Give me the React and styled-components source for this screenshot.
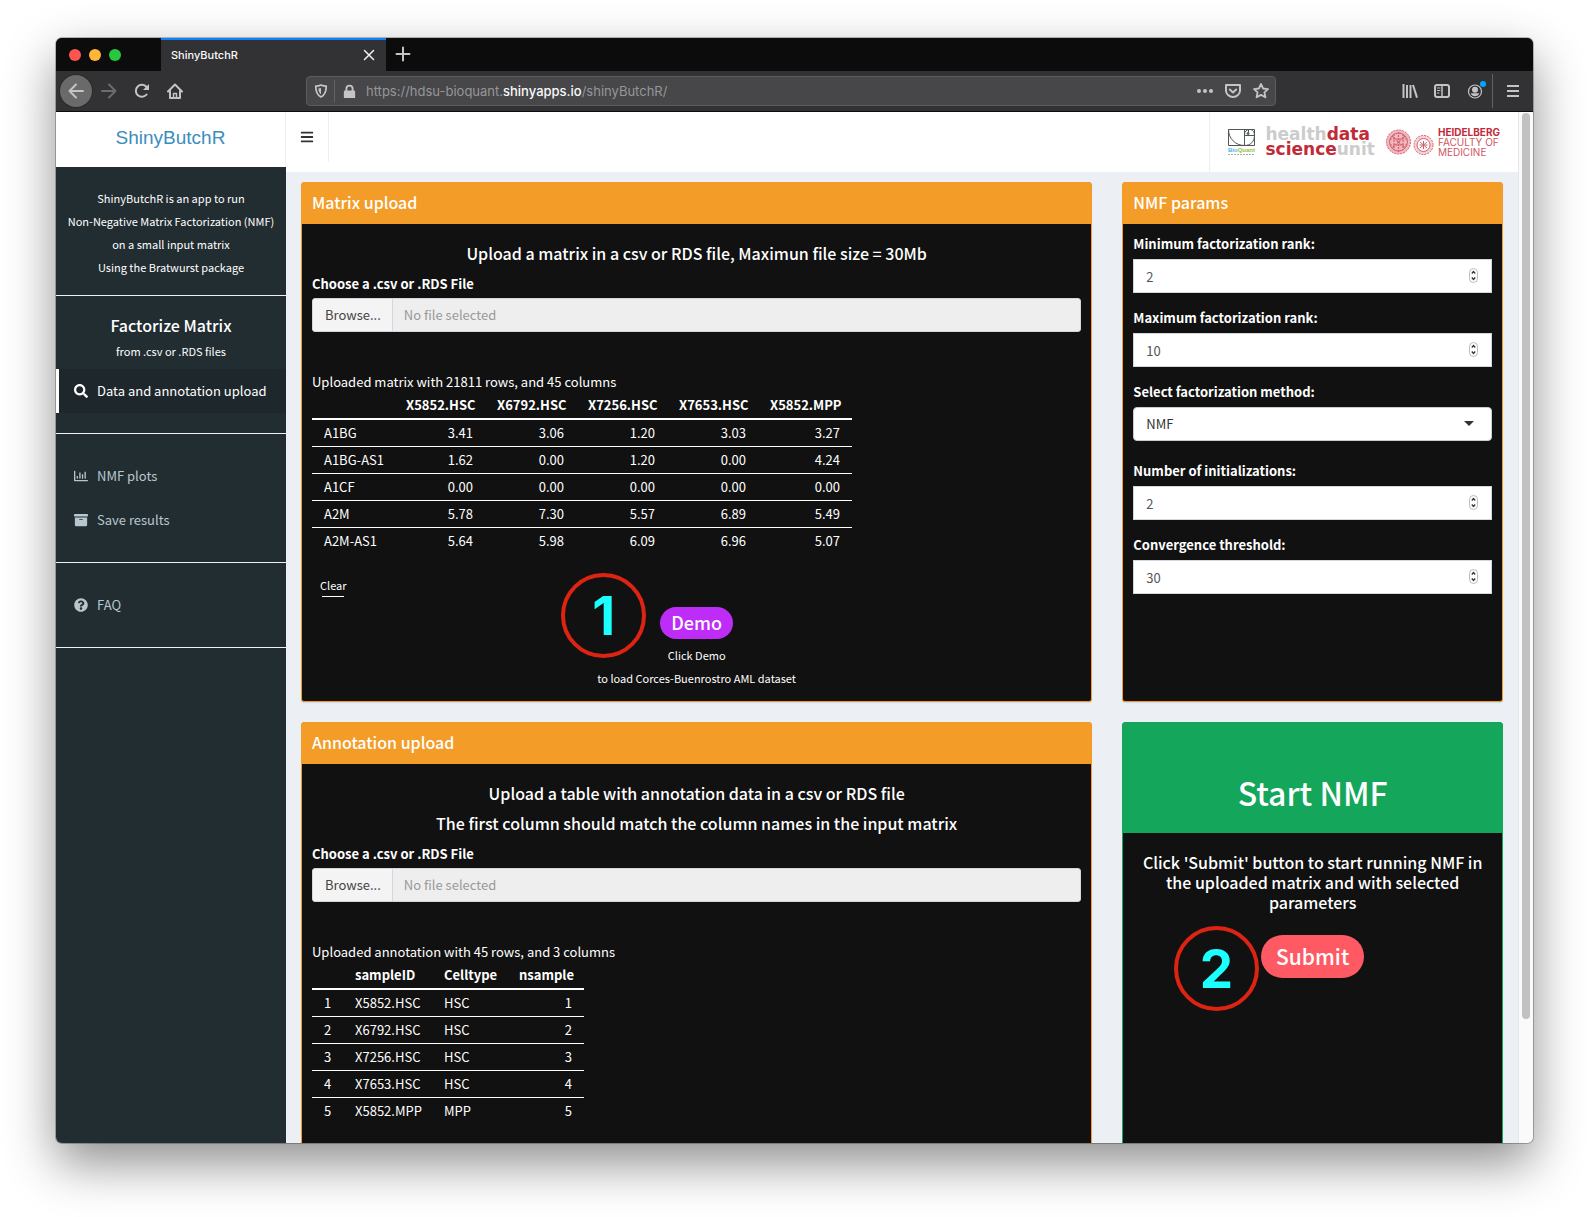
import React from "react";
import styled, { createGlobalStyle, css } from "styled-components";
import {
  FaSearch,
  FaRegChartBar,
  FaArchive,
  FaQuestionCircle,
  FaBars,
} from "react-icons/fa";

const sans = `"Noto Sans CJK SC", "Noto Sans", sans-serif`;
const chromeSans = `Inter, "Liberation Sans", sans-serif`;

const tones = { warning: "#f39c28", success: "#14a65b" };

const GlobalStyle = createGlobalStyle`
  *, *::before, *::after { box-sizing: border-box; }
  body {
    margin: 0;
    background: #fff;
    color: #fff;
    font: 400 13px/20px ${sans};
  }
  button, input, select { font: inherit; color: inherit; margin: 0; }
  button { border: 0; padding: 0; background: none; cursor: pointer; }
  h1, h2, h3, h4, p, ul { margin: 0; padding: 0; font-weight: 500; }
  p { font-weight: 400; }
  ul { list-style: none; }
  a { color: inherit; text-decoration: none; }
`;

const Stage = styled.div`
  display: flex;
  height: 100vh;
  padding: 38px 56px 74px;
`;

const Window = styled.div`
  flex: 1;
  min-width: 0;
  display: flex;
  flex-direction: column;
  overflow: hidden;
  border-radius: 6px;
  background: #323234;
  box-shadow: 0 0 0 1px rgba(0, 0, 0, 0.25), 0 20px 50px rgba(0, 0, 0, 0.45);
`;

/* Browser chrome */

const TabBar = styled.div`
  display: flex;
  flex: none;
  height: 33px;
  background: #0c0c0d;
  font-family: ${chromeSans};
`;

const TrafficLights = styled.div`
  display: flex;
  align-items: center;
  gap: 8px;
  width: 105px;
  padding-left: 13px;
`;

const Light = styled.span`
  width: 12px;
  height: 12px;
  border-radius: 50%;
  background: ${(p) => p.$color};
`;

const Tab = styled.div`
  display: flex;
  align-items: center;
  justify-content: space-between;
  width: 225px;
  padding: 0 11px 1px 10px;
  border-top: 2px solid #0a84ff;
  background: #323234;
  color: #f9f9fa;
  font-size: 11px;
  font-weight: 500;
`;

const IconButton = styled.button`
  display: flex;
  align-items: center;
  justify-content: center;
  flex: none;
  width: ${(p) => p.$width || 32}px;
  height: 32px;
  border-radius: 50%;
  color: ${(p) => (p.$dim ? "#6c6c6e" : "#c4c4c6")};
  ${(p) =>
    p.$filled &&
    css`
      background: #6a6a6b;
      box-shadow: 0 0 0 1px #2a2a2b;
    `}
`;

const TabClose = styled.button`
  display: flex;
  color: #f0f0f1;
`;

const Toolbar = styled.div`
  display: flex;
  align-items: center;
  flex: none;
  height: 41px;
  padding-left: 4px;
  border-bottom: 1px solid #0c0c0d;
  background: #323234;
`;

const NavButtons = styled.div`
  display: flex;
  gap: 1px;
`;

const UrlBar = styled.div`
  display: flex;
  align-items: center;
  flex: 1;
  height: 30px;
  margin: 0 118px 0 115px;
  padding: 0 0 0 1px;
  border: 1px solid #5c5c5e;
  border-radius: 4px;
  background: #474749;
  color: #b1b1b3;
`;

const Divider = styled.span`
  width: 1px;
  height: ${(p) => p.$height}px;
  background: #626264;
`;

const Url = styled.div`
  flex: 1;
  padding-left: 3px;
  color: #96969a;
  font: 400 13px/20px ${chromeSans};
  b {
    font-weight: 500;
    color: #f9f9fa;
  }
`;

/* Page */

const Page = styled.div`
  display: flex;
  flex: 1;
  min-height: 0;
  background: #ecf0f5;
`;

const Sidebar = styled.aside`
  flex: none;
  width: 230px;
  background: #222d32;
`;

const Brand = styled.a`
  display: block;
  height: 55px;
  border-right: 1px solid #eee;
  background: #fff;
  color: #3c8dbc;
  text-align: center;
  font: 400 19px/52px "Liberation Sans", Arial, sans-serif;
`;

const Small = styled.p`
  font-size: 11px;
  line-height: 23px;
  text-align: center;
`;

const Intro = styled.div`
  padding: 20px 0 16px;
`;

const SideSection = styled.div`
  padding: 20px 0;
  border-top: 1px solid #f0f0f0;
  &:last-child {
    border-bottom: 1px solid #f0f0f0;
  }
`;

const Heading = styled.h4`
  font-size: 16px;
  line-height: 20px;
  text-align: center;
`;

const SideTitle = styled(Heading)`
  line-height: 18px;
`;

const SideCaption = styled(Small)`
  padding: 6px 0;
`;

const SideLink = styled.a`
  display: flex;
  align-items: center;
  gap: 9px;
  height: 44px;
  padding-left: 15px;
  border-left: 3px solid ${(p) => (p.$active ? "#fff" : "transparent")};
  background: ${(p) => (p.$active ? "#1e282c" : "transparent")};
  color: ${(p) => (p.$active ? "#fff" : "#b8c7ce")};
`;

const Main = styled.div`
  flex: 1;
  min-width: 0;
  overflow: hidden;
`;

const Header = styled.header`
  display: flex;
  align-items: flex-start;
  justify-content: space-between;
  height: 60px;
  background: #fff;
`;

const Toggle = styled.button`
  display: flex;
  align-items: center;
  justify-content: center;
  width: 43px;
  height: 50px;
  border-right: 1px solid #eee;
  color: #333;
`;

const Logos = styled.div`
  display: flex;
  align-items: center;
  height: 60px;
  padding: 0 18px;
  border-left: 1px solid #eee;
`;

const UnitLogo = styled.div`
  margin: 0 11px 0 10px;
  color: #ccc;
  font: 700 17px/15px "DejaVu Sans", sans-serif;
  b {
    color: #c22a38;
  }
`;

const FacultyLogo = styled.div`
  margin-left: 4px;
  color: #cf5663;
  font: 400 10px/10px ${chromeSans};
  b {
    color: #c22a38;
  }
`;

const Content = styled.main`
  display: flex;
  padding-top: 10px;
`;

const Column = styled.div`
  width: calc(100% * ${(p) => p.$span} / 12);
  padding: 0 15px;
`;

const Box = styled.section`
  display: flex;
  flex-direction: column;
  min-height: 520px;
  margin-bottom: 20px;
  border: 1px solid ${(p) => tones[p.$tone]};
  border-radius: 3px;
  background: #111;
  box-shadow: 0 1px 1px rgba(0, 0, 0, 0.1);
`;

const BoxHeader = styled.header`
  padding: ${(p) => (p.$large ? "49px 10px 21px" : "9px 10px 12px")};
  background: ${(p) => tones[p.$tone]};
  text-align: ${(p) => (p.$large ? "center" : "left")};
`;

const BoxTitle = styled.h3`
  font-size: 16px;
  line-height: 20px;
`;

const BigTitle = styled.h1`
  font-size: 32px;
  line-height: 40px;
`;

const BoxBody = styled.div`
  padding: 10px;
`;

const Lead = styled(Heading)`
  margin: 9px 0 10px;
`;

const Label = styled.label`
  display: block;
  margin-bottom: 5px;
  font-weight: 700;
`;

const FileLabel = styled(Label)`
  margin: 11px 0 4px;
`;

const FilePicker = styled.div`
  display: flex;
  height: 34px;
  margin-bottom: 40px;
  border: 1px solid #d2d6de;
  border-radius: 3px;
  background: #eee;
  overflow: hidden;
`;

const Browse = styled.label`
  padding: 6px 11px 6px 12px;
  border-right: 1px solid #d2d6de;
  background: #f4f4f4;
  color: #444;
  cursor: pointer;
`;

const FileName = styled.input`
  flex: 1;
  min-width: 0;
  padding: 0 11px;
  border: 0;
  background: transparent;
  color: #555;
  &::placeholder {
    color: #999;
    opacity: 1;
  }
`;

const Table = styled.table`
  width: ${(p) => p.$width}px;
  table-layout: fixed;
  border-collapse: separate;
  border-spacing: 0;
  thead th {
    border-bottom: 2px solid #fff;
  }
  tbody tr:first-child td {
    border-top: 0;
  }
`;

const align = css`
  padding: 3px 12px;
  text-align: ${(p) => (p.$right ? "right" : "left")};
  white-space: nowrap;
`;

const Th = styled.th`
  ${align}
  font-weight: 700;
`;

const Td = styled.td`
  ${align}
  border-top: 1px solid #fff;
`;

const ClearButton = styled.button`
  display: flex;
  flex-direction: column;
  align-items: center;
  margin: 21px 0 10px;
  padding: 0 8px;
  font-size: 11px;
  line-height: 21px;
  &::after {
    content: "";
    width: 22px;
    height: 1px;
    background: #fff;
  }
`;

const Action = styled.div`
  display: flex;
  justify-content: center;
  margin: ${(p) => p.$margin};
`;

const ActionAnchor = styled.div`
  position: relative;
`;

const Pill = styled.button`
  display: block;
  height: ${(p) => p.$height}px;
  padding: 0 ${(p) => p.$pad}px 2px;
  border-radius: 22px;
  background: ${(p) => p.$color};
  font-size: ${(p) => p.$size}px;
  font-weight: 500;
`;

const Step = styled.span`
  position: absolute;
  top: ${(p) => p.$top}px;
  right: calc(100% + ${(p) => p.$gap}px);
  width: 85px;
  height: 85px;
  border: 4px solid #dd2413;
  border-radius: 50%;
  color: #1cffff;
  text-align: center;
  font: 700 53px/78px ${chromeSans};
`;

const Field = styled.div`
  margin-bottom: ${(p) => p.$gap || 15}px;
`;

const Control = styled.div`
  position: relative;
  svg {
    position: absolute;
    right: ${(p) => p.$inset}px;
    top: 9px;
    pointer-events: none;
  }
`;

const controlStyle = css`
  display: block;
  width: 100%;
  height: 34px;
  padding: 0 12px;
  border: 1px solid #d2d6de;
  background: #fff;
  appearance: none;
`;

const NumberInput = styled.input`
  ${controlStyle}
  color: #555;
  appearance: textfield;
  &::-webkit-inner-spin-button,
  &::-webkit-outer-spin-button {
    appearance: none;
    margin: 0;
  }
`;

const Select = styled.select`
  ${controlStyle}
  border-color: #ccc;
  border-radius: 4px;
  color: #333;
`;

const ScrollTrack = styled.div`
  flex: none;
  width: 15px;
  padding: 1px 3px;
  border-left: 1px solid #e6e6e6;
  background: #fafafa;
`;

const ScrollThumb = styled.div`
  width: 8px;
  height: 88%;
  border-radius: 4px;
  background: #c1c1c1;
`;

/* Drawings */

const Icon = ({ size = 16, children, ...rest }) => (
  <svg
    width={size}
    height={size}
    viewBox="0 0 16 16"
    fill="none"
    stroke="currentColor"
    strokeWidth="2"
    strokeLinecap="round"
    strokeLinejoin="round"
    aria-hidden="true"
    {...rest}
  >
    {children}
  </svg>
);

const BackIcon = () => (
  <Icon><path d="M15 8H1.5M8 1.5 1.5 8 8 14.5" /></Icon>
);
const ForwardIcon = () => (
  <Icon><path d="M1 8h13.5M8 1.5 14.5 8 8 14.5" /></Icon>
);
const ReloadIcon = () => (
  <Icon>
    <path d="M12.6 11.5A6 6 0 1 1 12.5 4" />
    <path d="M15 1v6H9z" fill="currentColor" stroke="none" />
  </Icon>
);
const HomeIcon = () => (
  <Icon>
    <path d="M1 8.5 8 1.5l7 7M3 7.5V15h10V7.5" />
    <path d="M6.5 15v-4.5h3V15" strokeWidth="1.5" />
  </Icon>
);
const ShieldIcon = () => (
  <Icon size={14}>
    <path d="M8 1.2c2 1 4 1.3 6 1.3 0 6-1.5 10-6 12.3C3.500 12.5 2 8.5 2 2.5c2 0 4-.3 6-1.300z" />
    <path d="M8 4.5v7.3C6 10.300 5 8 5 5.2z" fill="currentColor" stroke="none" />
  </Icon>
);
const LockIcon = () => (
  <Icon size={15}>
    <rect x="2" y="7" width="12" height="8" rx="1" fill="currentColor" stroke="none" />
    <path d="M4.7 8V5a3.3 3.3 0 0 1 6.6 0v3" />
  </Icon>
);
const DotsIcon = () => (
  <Icon fill="currentColor" stroke="none">
    <circle cx="2" cy="8" r="2" />
    <circle cx="8" cy="8" r="2" />
    <circle cx="14" cy="8" r="2" />
  </Icon>
);
const PocketIcon = () => (
  <Icon>
    <path d="M1 2h14v5.5a7 6.5 0 0 1-14 0z" />
    <path d="m4.8 6.5 3.2 3 3.2-3" />
  </Icon>
);
const StarIcon = () => (
  <Icon strokeWidth="1.8">
    <path d="m8 1 2.1 4.500 4.900.6-3.600 3.300 1 4.900L8 11.900l-4.400 2.400 1-4.900L1 6.100l4.900-.6z" />
  </Icon>
);
const LibraryIcon = () => (
  <Icon strokeLinecap="butt">
    <path d="M1.500 1v14M5 2v13M8.500 2v13M11 2l4 12.600" />
  </Icon>
);
const SidebarIcon = () => (
  <Icon>
    <rect x="1" y="2" width="14" height="12" rx="2" />
    <path d="M8 2v12" strokeWidth="1.5" />
    <path d="M3.3 5H6M3.3 7.5H6M3.3 10H5" strokeWidth="1" />
  </Icon>
);
const AccountIcon = () => (
  <svg width="22" height="22" viewBox="0 0 22 22" aria-hidden="true">
    <circle cx="11" cy="11.500" r="6.500" fill="none" stroke="currentColor" strokeWidth="1.200" />
    <circle cx="11" cy="9.800" r="3" fill="currentColor" />
    <path d="M6.800 13.300h8.400c-.6 2.200-2.200 3-4.200 3s-3.600-.8-4.200-3z" fill="currentColor" />
    <circle cx="19" cy="4" r="3" fill="#00a8ff" />
  </svg>
);
const MenuIcon = () => (
  <Icon strokeLinecap="butt"><path d="M2 3h12M2 8h12M2 13h12" /></Icon>
);
const CloseIcon = () => (
  <Icon size={12}><path d="m2 2 12 12M14 2 2 14" /></Icon>
);
const PlusIcon = () => (
  <Icon><path d="M8 1.5v13M1.5 8h13" /></Icon>
);

const BioQuantLogo = () => (
  <svg width="27" height="27" viewBox="0 0 27 27" role="img" aria-label="BioQuant">
    <g fill="none" stroke="#555" strokeWidth="1">
      <path d="M.5.5h26v16H.5zM16.5.5v16M16.5 6.5h10M20.5.5v6" />
      <path d="M.5.500c0 9 7 16 16 16 6 0 10-4 10-10 0-4-2-6-5-6s-5 2-5 5" />
    </g>
    <circle cx="20" cy="4.500" r="1.500" fill="#3a7f9a" />
    <text x="0" y="23" fontFamily="Liberation Sans, sans-serif" fontSize="6" fontWeight="700" fill="#3fb5e8">
      Bio<tspan fill="#8cc63f">Quant</tspan>
    </text>
    <path d="M0 25.500h27" stroke="#aaa" strokeWidth="1" strokeDasharray="2 1" />
  </svg>
);

const SealsLogo = () => (
  <svg width="48" height="27" viewBox="0 0 48 27" aria-hidden="true">
    <g fill="none" stroke="#d4606c">
      <circle cx="12.500" cy="13" r="12" fill="#efb9bf" strokeWidth="1" strokeDasharray="2 1" />
      <circle cx="12.500" cy="13" r="9" strokeWidth="1" />
      <path d="M12.500 3v20M8 5v16M17 5v16M4 10h17M4 16h17M6 7l13 12M19 7 6 19" strokeWidth="1.200" strokeDasharray="2 1" />
      <circle cx="37.500" cy="16" r="9.500" fill="#f6d3d7" strokeWidth="1" strokeDasharray="2 1" />
      <circle cx="37.500" cy="16" r="6.500" fill="#fff" strokeWidth="1" />
      <path d="M34 13l7 6M41 13l-7 6M33.500 16h8M37.500 12v8" strokeWidth="1" />
    </g>
  </svg>
);

const SpinnerIcon = () => (
  <svg width="9" height="15" viewBox="0 0 9 15" aria-hidden="true">
    <rect x=".5" y=".5" width="8" height="14" rx="4" fill="#fff" stroke="#bbb" />
    <path d="m2.800 5.500 1.700-2 1.700 2M2.800 9.500l1.700 2 1.700-2" fill="none" stroke="#333" strokeWidth="1.300" />
  </svg>
);

const CaretIcon = () => (
  <svg width="10" height="15" viewBox="0 0 10 15" aria-hidden="true">
    <path d="M0 5h10L5 10z" fill="#333" />
  </svg>
);

/* Data */

const matrix = {
  width: 540,
  columns: [
    { name: "", width: 82 },
    { name: "X5852.HSC", width: 91, right: true },
    { name: "X6792.HSC", width: 91, right: true },
    { name: "X7256.HSC", width: 91, right: true },
    { name: "X7653.HSC", width: 91, right: true },
    { name: "X5852.MPP", width: 94, right: true },
  ],
  rows: [
    ["A1BG", "3.41", "3.06", "1.20", "3.03", "3.27"],
    ["A1BG-AS1", "1.62", "0.00", "1.20", "0.00", "4.24"],
    ["A1CF", "0.00", "0.00", "0.00", "0.00", "0.00"],
    ["A2M", "5.78", "7.30", "5.57", "6.89", "5.49"],
    ["A2M-AS1", "5.64", "5.98", "6.09", "6.96", "5.07"],
  ],
};

const annotation = {
  width: 272,
  columns: [
    { name: "", width: 31 },
    { name: "sampleID", width: 89 },
    { name: "Celltype", width: 75 },
    { name: "nsample", width: 77, right: true },
  ],
  rows: [
    ["1", "X5852.HSC", "HSC", "1"],
    ["2", "X6792.HSC", "HSC", "2"],
    ["3", "X7256.HSC", "HSC", "3"],
    ["4", "X7653.HSC", "HSC", "4"],
    ["5", "X5852.MPP", "MPP", "5"],
  ],
};

const DataTable = ({ data }) => (
  <Table $width={data.width}>
    <colgroup>
      {data.columns.map((c, i) => (
        <col key={i} width={c.width} />
      ))}
    </colgroup>
    <thead>
      <tr>
        {data.columns.map((c, i) => (
          <Th key={i} $right={c.right} scope="col">{c.name || "\u00a0"}</Th>
        ))}
      </tr>
    </thead>
    <tbody>
      {data.rows.map((row) => (
        <tr key={row[0]}>
          {row.map((cell, i) => (
            <Td key={i} $right={data.columns[i].right}>{cell}</Td>
          ))}
        </tr>
      ))}
    </tbody>
  </Table>
);

const FileField = ({ id }) => (
  <>
    <FileLabel htmlFor={id}>Choose a .csv or .RDS File</FileLabel>
    <FilePicker>
      <Browse>
        Browse...
        <input id={id} type="file" hidden />
      </Browse>
      <FileName placeholder="No file selected" aria-label="Selected file" readOnly />
    </FilePicker>
  </>
);

const NumberField = ({ id, label, value }) => (
  <Field>
    <Label htmlFor={id}>{label}</Label>
    <Control $inset={14}>
      <NumberInput id={id} type="number" defaultValue={value} />
      <SpinnerIcon />
    </Control>
  </Field>
);

export default function App() {
  return (
    <>
      <GlobalStyle />
      <Stage>
        <Window>
          <TabBar>
            <TrafficLights>
              <Light $color="#ff5550" />
              <Light $color="#ffb537" />
              <Light $color="#27c840" />
            </TrafficLights>
            <Tab>
              ShinyButchR
              <TabClose aria-label="Close tab"><CloseIcon /></TabClose>
            </Tab>
            <IconButton $width={34} aria-label="New tab"><PlusIcon /></IconButton>
          </TabBar>
          <Toolbar>
            <NavButtons>
              <IconButton $filled aria-label="Back"><BackIcon /></IconButton>
              <IconButton $dim aria-label="Forward"><ForwardIcon /></IconButton>
              <IconButton aria-label="Reload"><ReloadIcon /></IconButton>
              <IconButton aria-label="Home"><HomeIcon /></IconButton>
            </NavButtons>
            <UrlBar>
              <IconButton $width={26} aria-label="Tracking protection"><ShieldIcon /></IconButton>
              <Divider $height={22} />
              <IconButton $width={28} aria-label="Site security"><LockIcon /></IconButton>
              <Url>
                https://hdsu-bioquant.<b>shinyapps.io</b>/shinyButchR/
              </Url>
              <IconButton $width={28} aria-label="Page actions"><DotsIcon /></IconButton>
              <IconButton $width={28} aria-label="Save to Pocket"><PocketIcon /></IconButton>
              <IconButton $width={28} aria-label="Bookmark"><StarIcon /></IconButton>
            </UrlBar>
            <IconButton aria-label="Library"><LibraryIcon /></IconButton>
            <IconButton aria-label="Sidebars"><SidebarIcon /></IconButton>
            <IconButton $width={34} aria-label="Account"><AccountIcon /></IconButton>
            <Divider $height={34} />
            <IconButton $width={40} aria-label="Menu"><MenuIcon /></IconButton>
          </Toolbar>

          <Page>
            <Sidebar>
              <Brand href="#">ShinyButchR</Brand>
              <Intro>
                <Small>ShinyButchR is an app to run</Small>
                <Small>Non-Negative Matrix Factorization (NMF)</Small>
                <Small>on a small input matrix</Small>
                <Small>Using the Bratwurst package</Small>
              </Intro>
              <SideSection>
                <SideTitle>Factorize Matrix</SideTitle>
                <SideCaption>from .csv or .RDS files</SideCaption>
                <SideLink href="#upload" $active>
                  <FaSearch size={14} />
                  Data and annotation upload
                </SideLink>
              </SideSection>
              <SideSection>
                <SideLink href="#plots">
                  <FaRegChartBar size={14} />
                  NMF plots
                </SideLink>
                <SideLink href="#save">
                  <FaArchive size={14} />
                  Save results
                </SideLink>
              </SideSection>
              <SideSection>
                <SideLink href="#faq">
                  <FaQuestionCircle size={14} />
                  FAQ
                </SideLink>
              </SideSection>
            </Sidebar>

            <Main>
              <Header>
                <Toggle aria-label="Toggle navigation"><FaBars size={14} /></Toggle>
                <Logos>
                  <BioQuantLogo />
                  <UnitLogo>
                    <div>health<b>data</b></div>
                    <div><b>science</b>unit</div>
                  </UnitLogo>
                  <SealsLogo />
                  <FacultyLogo>
                    <b>HEIDELBERG</b>
                    <br />
                    FACULTY OF
                    <br />
                    MEDICINE
                  </FacultyLogo>
                </Logos>
              </Header>

              <Content>
                <Column $span={8}>
                  <Box $tone="warning">
                    <BoxHeader $tone="warning"><BoxTitle>Matrix upload</BoxTitle></BoxHeader>
                    <BoxBody>
                      <Lead>Upload a matrix in a csv or RDS file, Maximun file size = 30Mb</Lead>
                      <FileField id="matrix-file" />
                      <p>Uploaded matrix with 21811 rows, and 45 columns</p>
                      <DataTable data={matrix} />
                      <ClearButton>Clear</ClearButton>
                      <Action $margin="0 0 5px">
                        <ActionAnchor>
                          <Pill $height={32} $pad={11} $size={18} $color="#be2cf7">Demo</Pill>
                          <Step $top={-34} $gap={14}>1</Step>
                        </ActionAnchor>
                      </Action>
                      <Small>Click Demo</Small>
                      <Small>to load Corces-Buenrostro AML dataset</Small>
                    </BoxBody>
                  </Box>
                  <Box $tone="warning">
                    <BoxHeader $tone="warning"><BoxTitle>Annotation upload</BoxTitle></BoxHeader>
                    <BoxBody>
                      <Lead>Upload a table with annotation data in a csv or RDS file</Lead>
                      <Lead>The first column should match the column names in the input matrix</Lead>
                      <FileField id="annotation-file" />
                      <p>Uploaded annotation with 45 rows, and 3 columns</p>
                      <DataTable data={annotation} />
                    </BoxBody>
                  </Box>
                </Column>

                <Column $span={4}>
                  <Box $tone="warning">
                    <BoxHeader $tone="warning"><BoxTitle>NMF params</BoxTitle></BoxHeader>
                    <BoxBody>
                      <NumberField id="rank-min" label="Minimum factorization rank:" value={2} />
                      <NumberField id="rank-max" label="Maximum factorization rank:" value={10} />
                      <Field $gap={20}>
                        <Label htmlFor="method">Select factorization method:</Label>
                        <Control $inset={18}>
                          <Select id="method" defaultValue="NMF">
                            <option>NMF</option>
                          </Select>
                          <CaretIcon />
                        </Control>
                      </Field>
                      <NumberField id="inits" label="Number of initializations:" value={2} />
                      <NumberField id="threshold" label="Convergence threshold:" value={30} />
                    </BoxBody>
                  </Box>
                  <Box $tone="success">
                    <BoxHeader $tone="success" $large><BigTitle>Start NMF</BigTitle></BoxHeader>
                    <BoxBody>
                      <Lead>
                        Click 'Submit' button to start running NMF in the uploaded matrix and with
                        selected parameters
                      </Lead>
                      <Action $margin="23px 0 0">
                        <ActionAnchor>
                          <Pill $height={43} $pad={15} $size={21} $color="#ff5964">Submit</Pill>
                          <Step $top={-9} $gap={2}>2</Step>
                        </ActionAnchor>
                      </Action>
                    </BoxBody>
                  </Box>
                </Column>
              </Content>
            </Main>
            <ScrollTrack><ScrollThumb /></ScrollTrack>
          </Page>
        </Window>
      </Stage>
    </>
  );
}
